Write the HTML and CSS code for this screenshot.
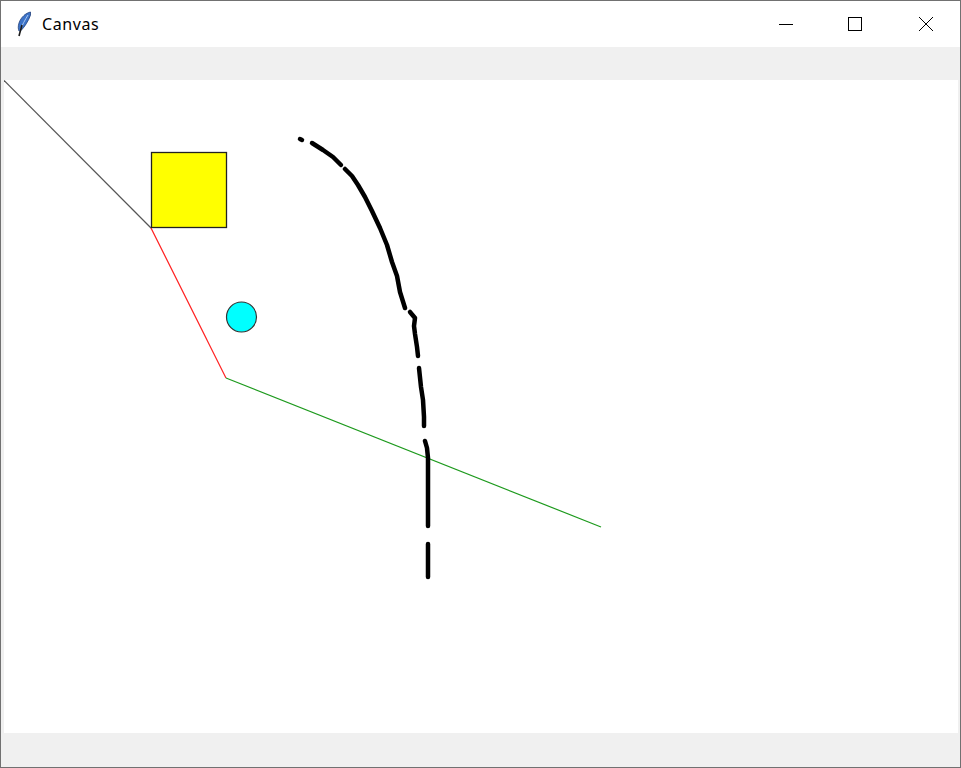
FILE: index.html
```html
<!DOCTYPE html>
<html>
<head>
<meta charset="utf-8">
<title>Canvas</title>
<link rel="stylesheet" href="styles.css">
</head>
<body>
<div class="window">
  <div class="titlebar">
    <div class="title-left">
      <svg class="app-icon" width="16" height="26" viewBox="0 0 16 26">
        <path d="M14.5 1 C10 2 5 6 3 12 C2 15 2 18 3 20 L5 19.5 C8.5 16 12.5 10 14.5 4 Z" fill="#3c73c8" stroke="#1f3f7a" stroke-width="0.8"/>
        <path d="M12 4 C9 9 6 14 4 20" fill="none" stroke="#a9c7f0" stroke-width="1"/>
        <path d="M6 14 L3 25" stroke="#1a1a1a" stroke-width="1.6" fill="none"/>
      </svg>
      <span class="title">Canvas</span>
    </div>
    <div class="controls">
      <div class="ctl"><svg width="16" height="16" viewBox="0 0 16 16"><path d="M1 8.5 H15" stroke="#000" stroke-width="1"/></svg></div>
      <div class="ctl ctl-max"><svg width="16" height="16" viewBox="0 0 16 16"><rect x="1.5" y="1.5" width="13" height="13" fill="none" stroke="#000" stroke-width="1"/></svg></div>
      <div class="ctl"><svg width="16" height="16" viewBox="0 0 16 16"><path d="M1 1 L15 15 M15 1 L1 15" stroke="#000" stroke-width="1"/></svg></div>
    </div>
  </div>
  <div class="client">
    <div class="canvas">
      <svg class="drawing" width="954" height="653" viewBox="4 80 954 653">
        <line x1="4" y1="80.5" x2="151" y2="228" stroke="#555" stroke-width="1.2"/>
        <line x1="151" y1="228" x2="226" y2="378" stroke="#ff2020" stroke-width="1.2"/>
        <line x1="226" y1="378" x2="601" y2="527" stroke="#1d9a1d" stroke-width="1.2"/>
        <rect x="151.5" y="152.5" width="75" height="75" fill="#ffff00" stroke="#222" stroke-width="1.3"/>
        <circle cx="241.5" cy="317" r="15" fill="#00ffff" stroke="#333" stroke-width="1.2"/>
        <g fill="none" stroke="#000" stroke-width="4.5" stroke-linecap="round" stroke-linejoin="round">
          <path d="M300 139 L302 140"/>
          <path d="M312 143 L323 150 L333 157 L341 165"/>
          <path d="M345 169 L352 176 L358 185 L365 197 L372 211 L380 228 L387 245 L392 262 L397 276 L400 292 L405 308"/>
          <path d="M410 312 L415 318 L414 326 L415 334 L417 347 L418 356"/>
          <path d="M419 368 L421 387 L423 400 L424 417 L424 426"/>
          <path d="M425 441 L427 448 L428 458 L428 526"/>
          <path d="M428 544 L428 577"/>
        </g>
      </svg>
    </div>
  </div>
</div>
</body>
</html>
```
FILE: styles.css
```css
html, body {
  margin: 0;
  padding: 0;
  background: #ffffff;
}
body {
  width: 961px;
  height: 768px;
  overflow: hidden;
  font-family: "Noto Sans", "Open Sans", sans-serif;
}
.window {
  box-sizing: border-box;
  width: 961px;
  height: 768px;
  border: 1px solid #717171;
  display: flex;
  flex-direction: column;
  background: #f0f0f0;
}
.titlebar {
  height: 46px;
  background: #ffffff;
  display: flex;
  align-items: center;
  justify-content: space-between;
  flex: none;
}
.title-left {
  display: flex;
  align-items: center;
  padding-left: 15px;
}
.app-icon {
  display: block;
}
.title {
  margin-left: 10px;
  font-size: 16px;
  letter-spacing: 0.6px;
  color: #000;
  line-height: 20px;
  margin-top: -1px;
}
.controls {
  display: flex;
  height: 46px;
}
.ctl {
  width: 69px;
  height: 46px;
  display: flex;
  align-items: center;
  justify-content: center;
}
.ctl-max {
  margin-right: 2px;
}
.ctl svg {
  display: block;
}
.client {
  flex: 1;
  padding: 33px 2px 34px 3px;
  background: #f0f0f0;
}
.canvas {
  width: 954px;
  height: 653px;
  background: #ffffff;
}
.drawing {
  display: block;
}
```
